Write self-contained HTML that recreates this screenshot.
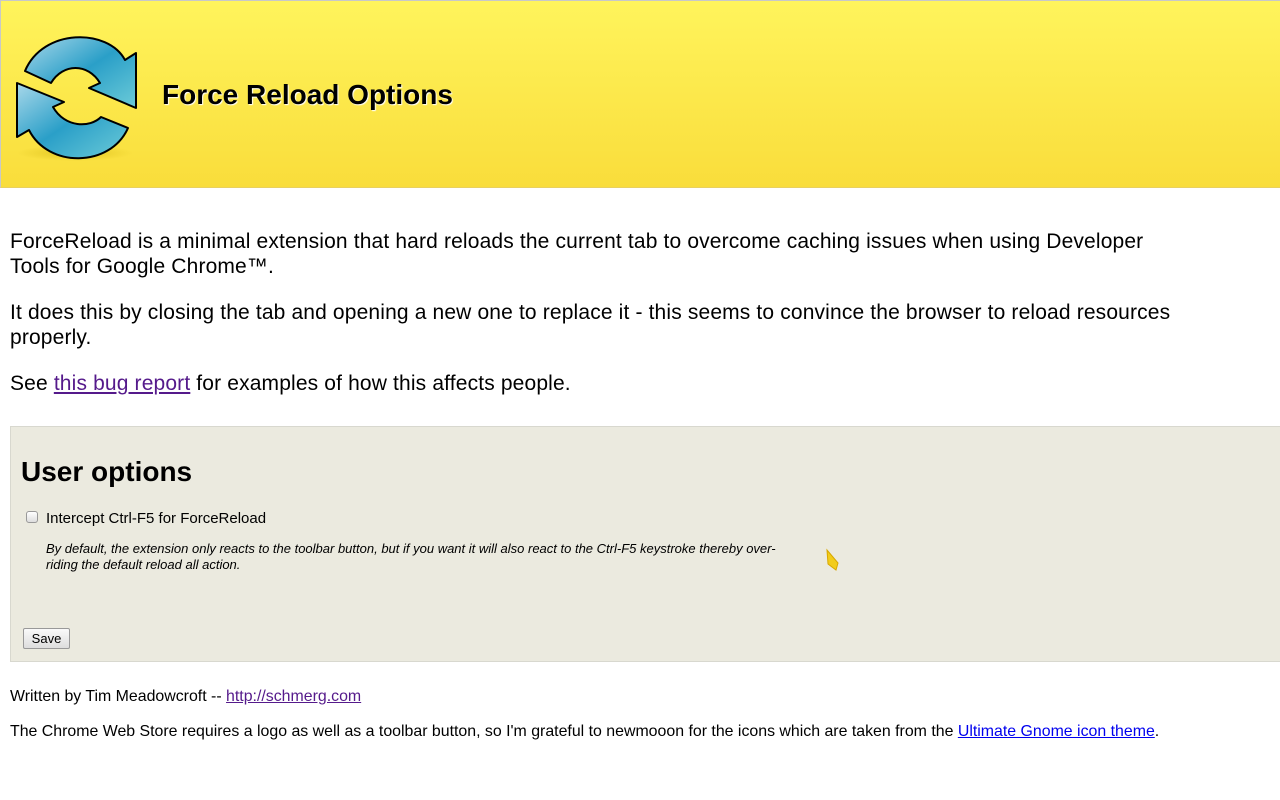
<!DOCTYPE html>
<html><head><meta charset="utf-8"><style>
body{margin:0;font-family:"Liberation Sans",sans-serif;color:#000;background:#fff;width:1280px;height:800px;overflow:hidden;position:relative}
.hdr{position:absolute;left:0;top:0;width:1280px;height:188px;box-sizing:border-box;border-top:1px solid #c8c8c8;border-left:1px solid #c8c8c8;border-bottom:1px solid #e8d060;background:linear-gradient(#fff45c,#f9dd3b)}
.hdr h1{position:absolute;left:161px;top:78px;margin:0;font-size:28px;font-weight:bold;text-shadow:1px 1px 1px #fff}
.logo{position:absolute;left:12px;top:32px}
p.m{position:absolute;left:10px;margin:0;font-size:21px;letter-spacing:0.15px;line-height:25px;width:1175px}
a{color:#551a8b}
.box{position:absolute;left:10px;top:426px;width:1280px;height:236px;box-sizing:border-box;background:#ebeadf;border:1px solid #d8d8cf}
.box h2{position:absolute;left:10px;top:29px;margin:0;font-size:28px;font-weight:bold}
.cb{position:absolute;left:15px;top:84px;width:10px;height:10px;border:1px solid #999;border-radius:3px;background:linear-gradient(#fff,#ddd)}
.lbl{position:absolute;left:35px;top:83px;font-size:15px}
.it{position:absolute;left:35px;top:114px;font-size:13px;font-style:italic;line-height:16px;width:760px}
.btn{position:absolute;left:12px;top:201px;width:47px;height:21px;box-sizing:border-box;border:1px solid #999;border-radius:2px;background:linear-gradient(#fafafa,#ddd);font-size:13px;text-align:center;line-height:19px}
.f{position:absolute;left:10px;margin:0;font-size:15.9px}
</style></head><body>
<div class="hdr">
<svg class="logo" width="130" height="130" viewBox="0 0 130 130">
<defs><linearGradient id="g" x1="0" y1="0" x2="1" y2="1"><stop offset="0" stop-color="#a9d8ea"/><stop offset=".5" stop-color="#2a9fc8"/><stop offset="1" stop-color="#6ccbd8"/></linearGradient>
<radialGradient id="s"><stop offset="0" stop-color="#c8a800" stop-opacity=".5"/><stop offset="1" stop-color="#c8a800" stop-opacity="0"/></radialGradient></defs>
<ellipse cx="62" cy="120" rx="58" ry="8" fill="url(#s)"/>
<path d="M12 38 C30 -5 95 -5 112 27 L123 20 L123 75 L76 55 L87 50 C75 30 50 30 38 50 Z" fill="url(#g)" stroke="#000" stroke-width="2" stroke-linejoin="round"/>
<path d="M4 50 L51 69 L40 74 C52 95 77 95 88 84 L115 95 C97 135 35 135 16 97 L4 104 Z" fill="url(#g)" stroke="#000" stroke-width="2" stroke-linejoin="round"/>
</svg>
<h1>Force Reload Options</h1>
</div>
<p class="m" style="top:229px">ForceReload is a minimal extension that hard reloads the current tab to overcome caching issues when using Developer Tools for Google Chrome™.</p>
<p class="m" style="top:300px">It does this by closing the tab and opening a new one to replace it - this seems to convince the browser to reload resources properly.</p>
<p class="m" style="top:371px">See <a href="#">this bug report</a> for examples of how this affects people.</p>
<div class="box">
<h2>User options</h2>
<div class="cb"></div>
<div class="lbl">Intercept Ctrl-F5 for ForceReload</div>
<div class="it">By default, the extension only reacts to the toolbar button, but if you want it will also react to the Ctrl-F5 keystroke thereby over-riding the default reload all action.</div>
<svg style="position:absolute;left:814px;top:121px" width="16" height="26" viewBox="0 0 16 26"><path d="M2 2 L13 15 L11 22 L3 16 Z" fill="#f2cc1a" stroke="#d8a800" stroke-width="1"/></svg>
<div class="btn">Save</div>
</div>
<p class="f" style="top:688px">Written by Tim Meadowcroft -- <a href="#">http://schmerg.com</a></p>
<p class="f" style="top:723px">The Chrome Web Store requires a logo as well as a toolbar button, so I'm grateful to newmooon for the icons which are taken from the <a href="#" style="color:#00e">Ultimate Gnome icon theme</a>.</p>
</body></html>
